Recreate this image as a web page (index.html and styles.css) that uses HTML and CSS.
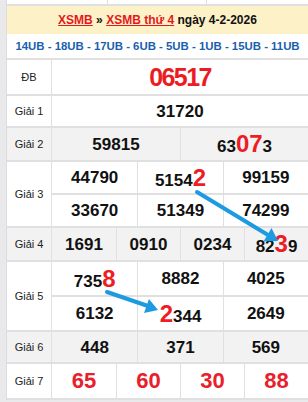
FILE: index.html
```html
<!DOCTYPE html>
<html lang="vi">
<head>
<meta charset="utf-8">
<link rel="stylesheet" href="styles.css">
</head>
<body>
<div class="page">
  <div class="prev"><span></span><span></span><span></span></div>
  <div class="head"><a class="lnk">XSMB</a>&nbsp;»&nbsp;<a class="lnk">XSMB thứ 4</a>&nbsp;ngày 4-2-2026</div>
  <div class="codes">14UB - 18UB - 17UB - 6UB - 5UB - 1UB - 15UB - 11UB</div>
  <div class="tbl">
    <div class="row r-db">
      <div class="lbl">ĐB</div>
      <div class="cells"><div class="sub c1"><div class="cell big">06517</div></div></div>
    </div>
    <div class="row r-g1">
      <div class="lbl">Giải 1</div>
      <div class="cells"><div class="sub c1"><div class="cell">31720</div></div></div>
    </div>
    <div class="row r-g2 alt">
      <div class="lbl">Giải 2</div>
      <div class="cells"><div class="sub c2"><div class="cell">59815</div><div class="cell">63<span class="hl">07</span>3</div></div></div>
    </div>
    <div class="row r-g3">
      <div class="lbl">Giải 3</div>
      <div class="cells">
        <div class="sub c3"><div class="cell">44790</div><div class="cell">5154<span class="hl">2</span></div><div class="cell">99159</div></div>
        <div class="sub c3"><div class="cell">33670</div><div class="cell">51349</div><div class="cell">74299</div></div>
      </div>
    </div>
    <div class="row r-g4 alt">
      <div class="lbl">Giải 4</div>
      <div class="cells"><div class="sub c4"><div class="cell">1691</div><div class="cell">0910</div><div class="cell">0234</div><div class="cell">82<span class="hl">3</span>9</div></div></div>
    </div>
    <div class="row r-g5">
      <div class="lbl">Giải 5</div>
      <div class="cells">
        <div class="sub c3"><div class="cell">735<span class="hl">8</span></div><div class="cell">8882</div><div class="cell">4025</div></div>
        <div class="sub c3"><div class="cell">6132</div><div class="cell"><span class="hl">2</span>344</div><div class="cell">2649</div></div>
      </div>
    </div>
    <div class="row r-g6 alt">
      <div class="lbl">Giải 6</div>
      <div class="cells"><div class="sub c3"><div class="cell">448</div><div class="cell">371</div><div class="cell">569</div></div></div>
    </div>
    <div class="row r-g7">
      <div class="lbl">Giải 7</div>
      <div class="cells"><div class="sub c4"><div class="cell red">65</div><div class="cell red">60</div><div class="cell red">30</div><div class="cell red">88</div></div></div>
    </div>
  </div>
</div>
<svg class="arrows" width="308" height="402" viewBox="0 0 308 402">
  <line x1="197" y1="192" x2="268" y2="235" stroke="#1e9be0" stroke-width="4" stroke-linecap="round"/>
  <polygon points="278,241 263.5,241.5 271.5,228" fill="#1e9be0"/>
  <line x1="107" y1="292" x2="148" y2="306" stroke="#1e9be0" stroke-width="4" stroke-linecap="round"/>
  <polygon points="158,310 144,313 149,299" fill="#1e9be0"/>
</svg>
</body>
</html>
```
FILE: styles.css
```css
* { box-sizing: border-box; margin: 0; padding: 0; }
html, body { width: 308px; height: 402px; overflow: hidden; }
body {
  position: relative;
  background: #e9e9ec;
  font-family: "Liberation Sans", Arial, sans-serif;
  color: #111;
}
.page {
  margin-left: 6px;
  background: #fff;
  border-left: 1px solid #dcdcdc;
}
.prev {
  display: grid;
  grid-template-columns: 100px 99px 1fr;
  height: 6px;
  border-bottom: 2px solid #e0e0e0;
}
.prev span + span { border-left: 1px solid #e0e0e0; }
.head {
  height: 28px;
  background: #fdf2c7;
  display: flex;
  align-items: center;
  justify-content: center;
  font-size: 12px;
  font-weight: bold;
  color: #111;
  white-space: nowrap;
}
.lnk { color: #e3191f; text-decoration: underline; }
.codes {
  height: 26px;
  border-bottom: 2px solid #e0e0e0;
  display: flex;
  align-items: center;
  justify-content: center;
  font-size: 11.4px;
  font-weight: bold;
  color: #1b5fae;
  white-space: nowrap;
}
.row {
  display: grid;
  grid-template-columns: 45px 1fr;
  border-bottom: 2px solid #e0e0e0;
}
.row.alt { background: #f2f2f2; }
.r-db { height: 36px; }
.r-g1 { height: 32px; }
.r-g2 { height: 34px; }
.r-g3 { height: 66px; }
.r-g4 { height: 34px; }
.r-g5 { height: 70px; }
.r-g6 { height: 32px; }
.r-g7 { height: 36px; }
.lbl {
  border-right: 1px solid #e0e0e0;
  display: flex;
  align-items: center;
  justify-content: center;
  font-size: 11px;
  color: #222;
}
.cells { display: flex; flex-direction: column; }
.sub { flex: 1; display: grid; }
.sub + .sub { border-top: 2px solid #e0e0e0; }
.c1 { grid-template-columns: 1fr; }
.c2 { grid-template-columns: 1fr 1fr; }
.c3 { grid-template-columns: 1fr 1fr 1fr; }
.c4 { grid-template-columns: 1fr 1fr 1fr 1fr; }
.cell {
  display: flex;
  align-items: baseline;
  justify-content: center;
  padding-top: 0;
  font-size: 17px;
  font-weight: bold;
  line-height: 1;
  align-content: center;
  flex-wrap: wrap;
}
.cell + .cell { border-left: 1px solid #e0e0e0; }
.hl { font-size: 24px; color: #ee1c25; }
.big { font-size: 25px; color: #ec1c24; letter-spacing: -1.6px; }
.red { font-size: 22px; color: #e8202a; }
.arrows { position: absolute; left: 0; top: 0; pointer-events: none; }
```
